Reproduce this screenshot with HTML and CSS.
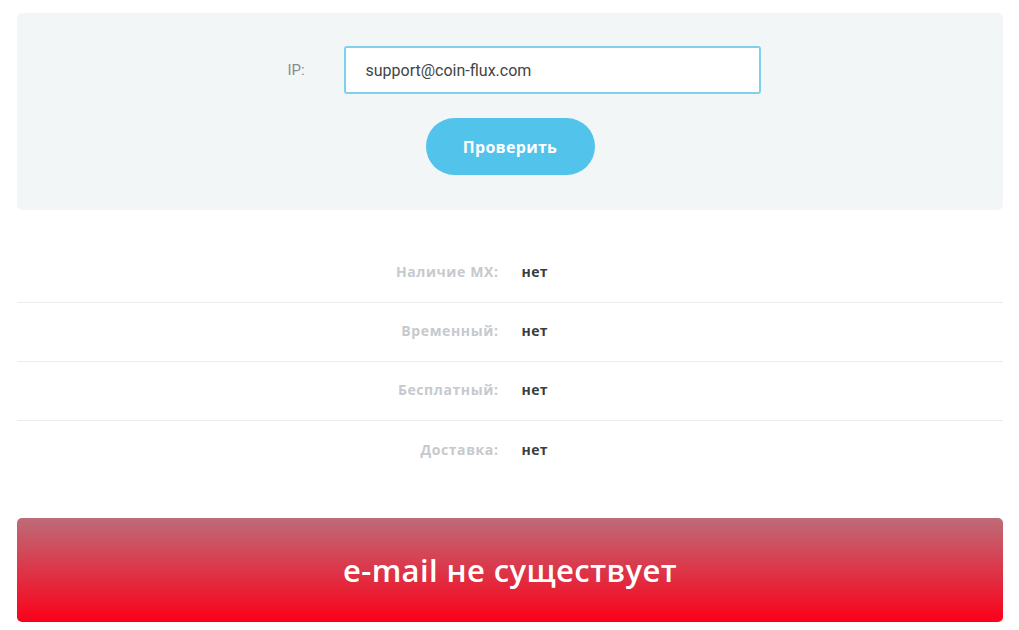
FILE: index.html
```html
<!DOCTYPE html>
<html lang="ru">
<head>
<meta charset="utf-8">
<link rel="stylesheet" href="styles.css">
</head>
<body>
<div class="page">
  <div class="panel">
    <div class="field">
      <label class="field-label">IP:</label>
      <div class="input">support@coin-flux.com</div>
    </div>
    <button class="btn">Проверить</button>
  </div>
  <div class="results">
    <div class="row"><span class="key">Наличие MX:</span><span class="val">нет</span></div>
    <div class="row"><span class="key">Временный:</span><span class="val">нет</span></div>
    <div class="row"><span class="key">Бесплатный:</span><span class="val">нет</span></div>
    <div class="row"><span class="key">Доставка:</span><span class="val">нет</span></div>
  </div>
  <div class="banner">e-mail не существует</div>
</div>
</body>
</html>
```

FILE: styles.css
```css
html, body {
  margin: 0;
  background: #ffffff;
}
.page {
  padding: 13px 16px 0 17px;
  font-family: "Open Sans", "Noto Sans", sans-serif;
}
.panel {
  background: #f3f6f7;
  border-radius: 5px;
  padding: 33px 0 35px;
  display: flex;
  flex-direction: column;
  align-items: center;
  gap: 24px;
}
.field {
  display: flex;
  align-items: center;
  margin-left: 28px;
}
.field-label {
  width: 56px;
  font-family: Roboto, sans-serif;
  font-size: 15px;
  color: #888c90;
}
.input {
  box-sizing: border-box;
  width: 417px;
  height: 48px;
  border: 2px solid #7fd0ec;
  border-radius: 3px;
  background: #fff;
  padding: 0 20px;
  display: flex;
  align-items: center;
  font-family: Roboto, sans-serif;
  font-size: 16px;
  color: #444;
}
.btn {
  width: 169px;
  height: 57px;
  border: none;
  border-radius: 29px;
  background: #52c3ea;
  color: #fff;
  font-family: "Open Sans", sans-serif;
  font-weight: 700;
  font-size: 16px;
  letter-spacing: 0.3px;
}
.results {
  margin-top: 34px;
}
.row {
  box-sizing: border-box;
  display: grid;
  grid-template-columns: 1fr 1fr;
  column-gap: 23px;
  align-items: center;
  height: 59px;
  padding-bottom: 3px;
  border-bottom: 1px solid #ececec;
  font-weight: 700;
  font-size: 14px;
}
.row:last-child {
  border-bottom: none;
}
.key {
  text-align: right;
  color: #c6c9cd;
  letter-spacing: 0.6px;
}
.val {
  color: #3a3d40;
  letter-spacing: 0.4px;
}
.banner {
  margin-top: 38px;
  height: 104px;
  border-radius: 5px;
  background: linear-gradient(to bottom, #bd6c78, #fb0019);
  display: flex;
  align-items: center;
  justify-content: center;
  color: #fff;
  font-weight: 600;
  font-size: 31px;
  letter-spacing: 0.4px;
}
```
